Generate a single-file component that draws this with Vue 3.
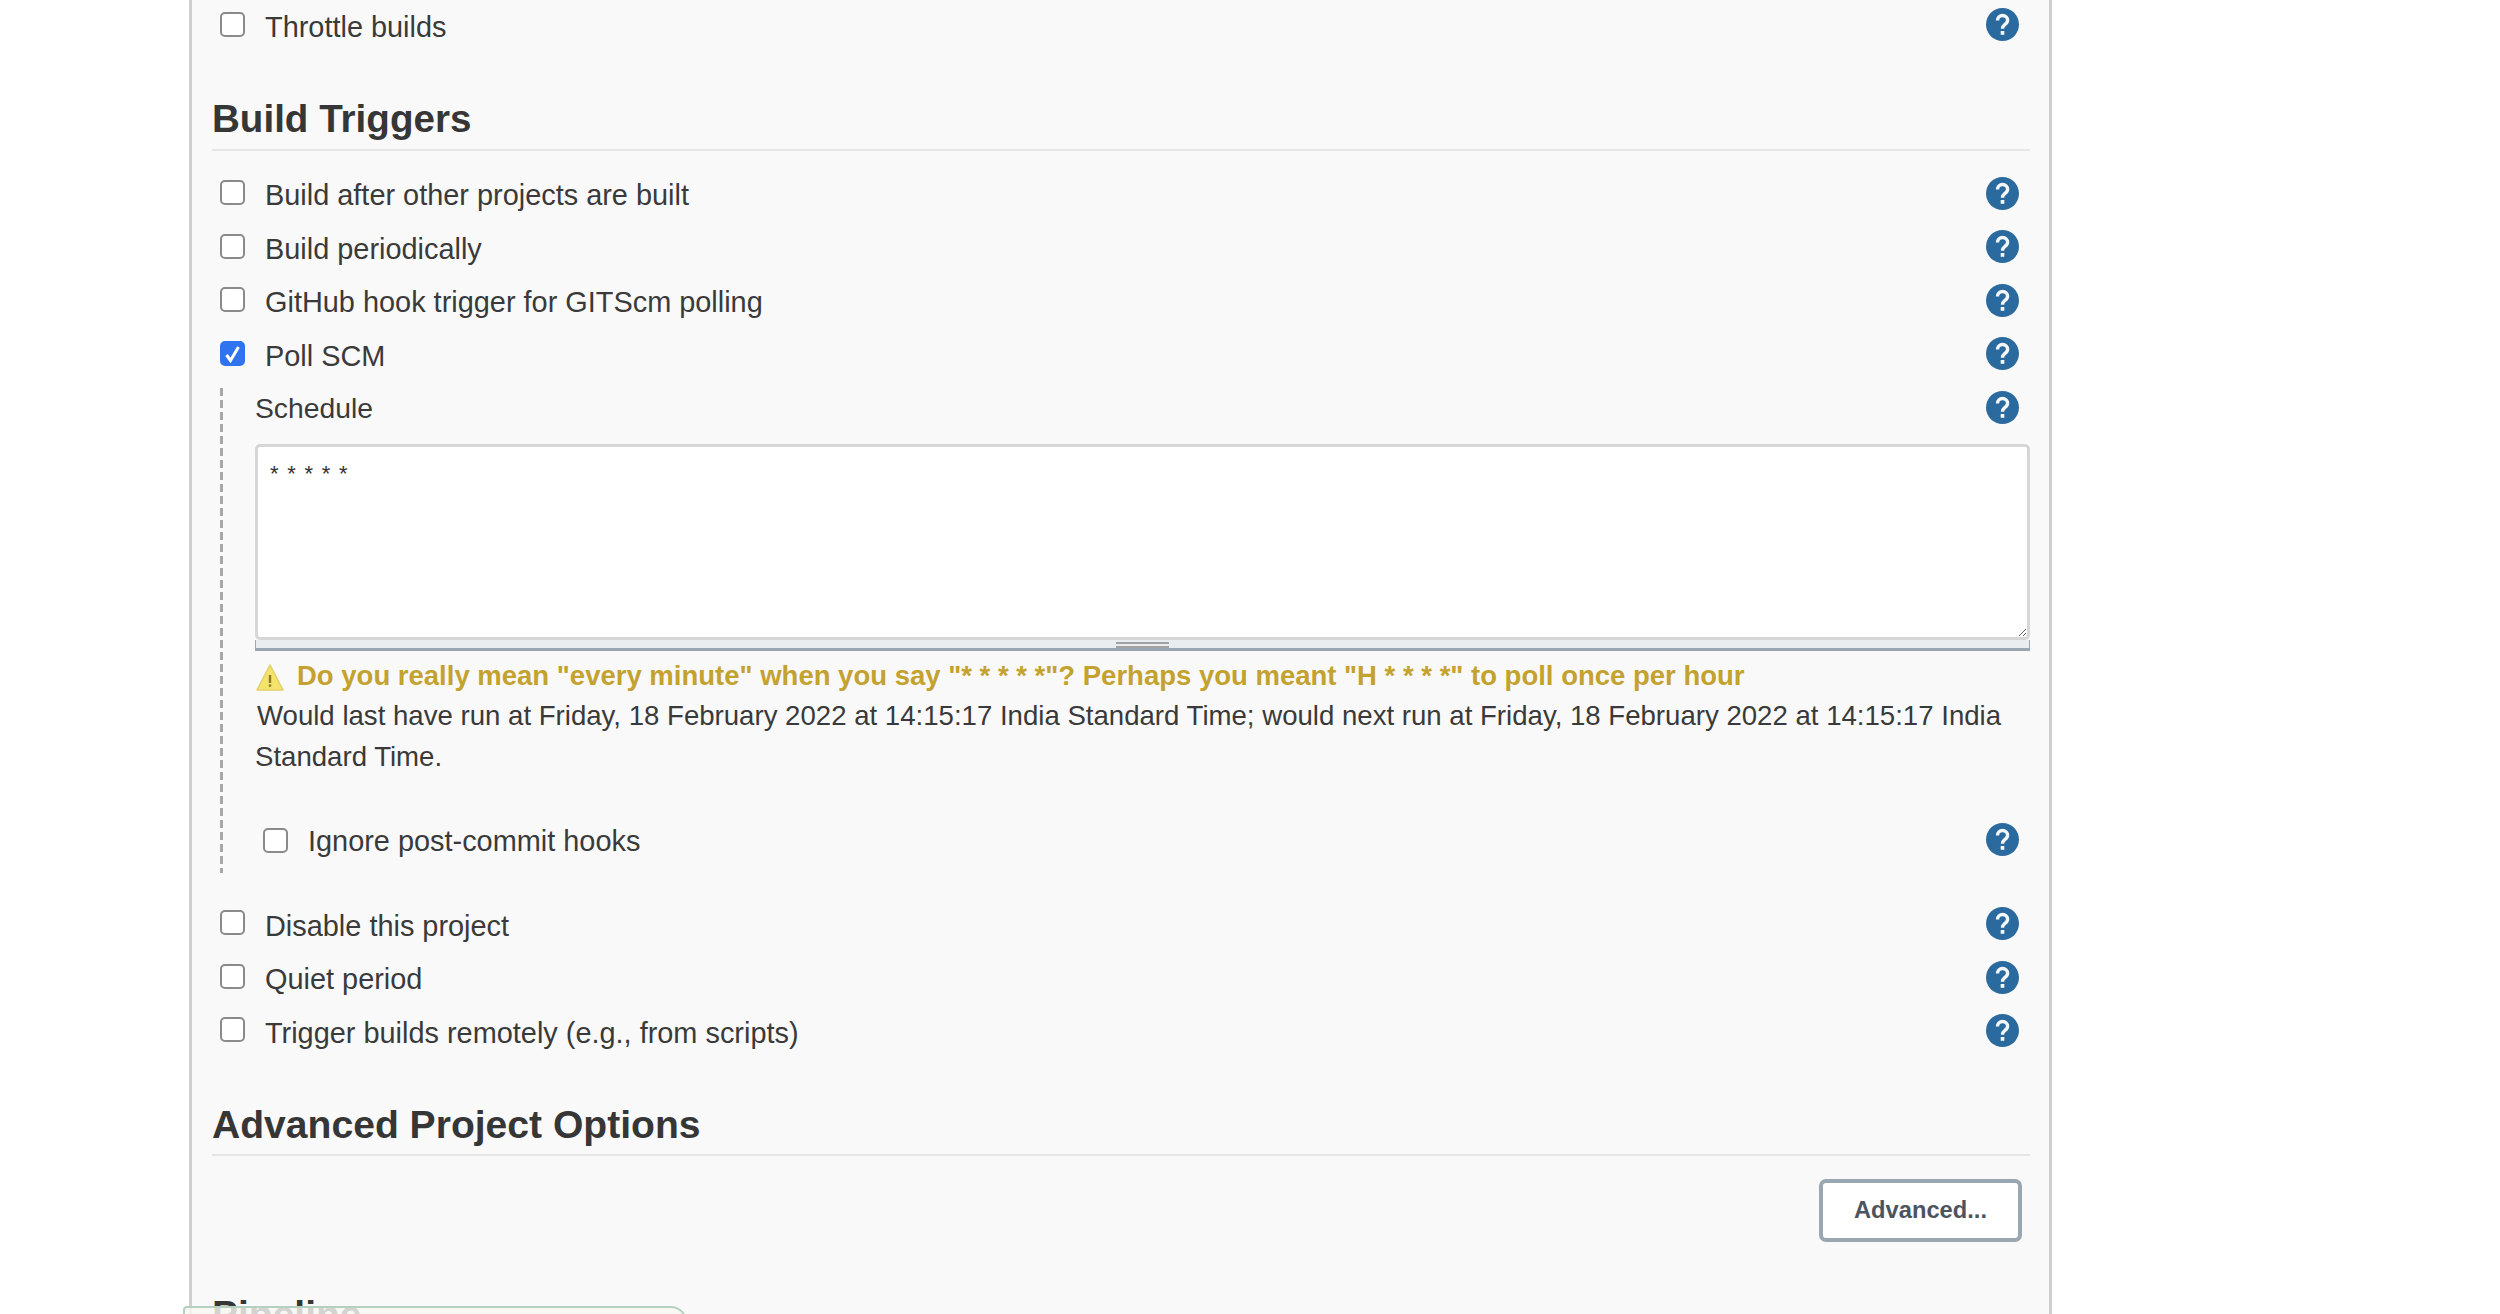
<script setup>
const triggers = [
  { label: 'Build after other projects are built', checked: false },
  { label: 'Build periodically', checked: false },
  { label: 'GitHub hook trigger for GITScm polling', checked: false },
  { label: 'Poll SCM', checked: true },
]
const lower = ['Disable this project', 'Quiet period', 'Trigger builds remotely (e.g., from scripts)']
</script>

<template>
  <div class="page">
    <main class="panel">
      <div class="row">
        <span class="box"></span>
        <span class="label">Throttle builds</span>
        <svg class="help" viewBox="0 0 33 33"><circle cx="16.5" cy="16.5" r="16.5" /><path d="M11.5 12.5C11.5 9.5 13.7 7.5 16.5 7.5C19.5 7.5 21.6 9.6 21.6 12.2C21.6 14.5 20.2 15.6 18.7 16.7C17.2 17.8 16.5 18.6 16.5 20.8" /><rect x="14.7" y="23" width="3.6" height="3.8" /></svg>
      </div>

      <h2 class="heading">Build Triggers</h2>
      <div class="rows">
        <div v-for="t in triggers" :key="t.label" class="row">
          <span class="box" :class="{ on: t.checked }">
            <svg v-if="t.checked" viewBox="0 0 25 25"><path d="M6.5 14L10.5 19.5L18.5 6" /></svg>
          </span>
          <span class="label">{{ t.label }}</span>
          <svg class="help" viewBox="0 0 33 33"><circle cx="16.5" cy="16.5" r="16.5" /><path d="M11.5 12.5C11.5 9.5 13.7 7.5 16.5 7.5C19.5 7.5 21.6 9.6 21.6 12.2C21.6 14.5 20.2 15.6 18.7 16.7C17.2 17.8 16.5 18.6 16.5 20.8" /><rect x="14.7" y="23" width="3.6" height="3.8" /></svg>
        </div>
      </div>

      <section class="nested">
        <div class="schedule-head">
          <span class="text">Schedule</span>
          <svg class="help" viewBox="0 0 33 33"><circle cx="16.5" cy="16.5" r="16.5" /><path d="M11.5 12.5C11.5 9.5 13.7 7.5 16.5 7.5C19.5 7.5 21.6 9.6 21.6 12.2C21.6 14.5 20.2 15.6 18.7 16.7C17.2 17.8 16.5 18.6 16.5 20.8" /><rect x="14.7" y="23" width="3.6" height="3.8" /></svg>
        </div>
        <div class="editor">
          <textarea class="cron" readonly spellcheck="false">* * * * *</textarea>
          <div class="grippie"><span class="grip"></span></div>
        </div>
        <div class="warning">
          <svg class="warn-icon" viewBox="0 0 28 27">
            <path d="M14 1L27 26H1Z" fill="#f5e46a" stroke="#e3d06c" stroke-width="1.6" stroke-linejoin="round" />
            <rect x="12.8" y="11" width="2.4" height="8" fill="#8a7a2c" />
            <rect x="12.8" y="20.4" width="2.4" height="2.4" fill="#8a7a2c" />
          </svg>
          <span>Do you really mean "every minute" when you say "* * * * *"? Perhaps you meant "H * * * *" to poll once per hour</span>
        </div>
        <p class="note">Would last have run at Friday, 18 February 2022 at 14:15:17 India Standard Time; would next run at Friday, 18 February 2022 at 14:15:17 India Standard Time.</p>
        <div class="row inner">
          <span class="box"></span>
          <span class="label">Ignore post-commit hooks</span>
          <svg class="help" viewBox="0 0 33 33"><circle cx="16.5" cy="16.5" r="16.5" /><path d="M11.5 12.5C11.5 9.5 13.7 7.5 16.5 7.5C19.5 7.5 21.6 9.6 21.6 12.2C21.6 14.5 20.2 15.6 18.7 16.7C17.2 17.8 16.5 18.6 16.5 20.8" /><rect x="14.7" y="23" width="3.6" height="3.8" /></svg>
        </div>
      </section>

      <div class="rows after">
        <div v-for="l in lower" :key="l" class="row">
          <span class="box"></span>
          <span class="label">{{ l }}</span>
          <svg class="help" viewBox="0 0 33 33"><circle cx="16.5" cy="16.5" r="16.5" /><path d="M11.5 12.5C11.5 9.5 13.7 7.5 16.5 7.5C19.5 7.5 21.6 9.6 21.6 12.2C21.6 14.5 20.2 15.6 18.7 16.7C17.2 17.8 16.5 18.6 16.5 20.8" /><rect x="14.7" y="23" width="3.6" height="3.8" /></svg>
        </div>
      </div>

      <h2 class="heading advanced">Advanced Project Options</h2>
      <div class="actions"><button class="btn" type="button">Advanced...</button></div>
      <h2 class="pipeline">Pipeline</h2>
    </main>
    <div class="overlay"></div>
  </div>
</template>

<style>
html, body { margin: 0; background: #fff; }
</style>

<style scoped>
.page {
  position: relative;
  height: 1314px;
  overflow: hidden;
  font-family: "Liberation Sans", Arial, sans-serif;
  color: #3a3a3a;
}
.panel {
  box-sizing: border-box;
  width: 1863px;
  height: 1314px;
  margin-left: 189px;
  padding: 0 19px 0 20px;
  background: #f9f9f9;
  border-left: 3px solid #cfcfcf;
  border-right: 3px solid #cfcfcf;
  overflow: hidden;
}
.row {
  display: flex;
  align-items: center;
  height: 53.5px;
  padding: 0 11px 0 8px;
}
.box {
  flex: none;
  box-sizing: border-box;
  width: 25px;
  height: 25px;
  margin-top: -5px;
  background: #fff;
  border: 2px solid #8a8a8a;
  border-radius: 5px;
}
.box.on { background: #2f74ee; border-color: #2f74ee; }
.box svg { display: block; width: 25px; height: 25px; margin: -2px; }
.box path { fill: none; stroke: #fff; stroke-width: 3; }
.label {
  flex: 1;
  margin-left: 20px;
  font-size: 28.9px;
  line-height: 40px;
}
.help { flex: none; width: 33px; height: 33px; margin-top: -4px; }
.help circle { fill: #2b6a9e; }
.help path { fill: none; stroke: #f4f8fb; stroke-width: 3.4; }
.help rect { fill: #f4f8fb; }
.heading {
  margin: 0;
  padding: 45.5px 0 9.5px;
  font-size: 38.6px;
  line-height: 40px;
  font-weight: 700;
  color: #363636;
  border-bottom: 2px solid #e5e5e5;
}
.rows { margin-top: 18px; }
.nested {
  margin: 5px 0 0 8px;
  padding: 0 0 0 35px;
  height: 485px;
  background: repeating-linear-gradient(to bottom, #a8a8a8 0 8px, transparent 8px 12px) left top / 3px 100% no-repeat;
}
.schedule-head {
  display: flex;
  align-items: center;
  justify-content: space-between;
  height: 40px;
  padding: 0 11px 0 0;
}
.schedule-head .help { margin-top: 0; }
.text { font-size: 28.3px; line-height: 40px; }
.editor { margin-top: 16px; }
.cron {
  display: block;
  box-sizing: border-box;
  width: 100%;
  height: 196px;
  padding: 14px 12px;
  background: #fff;
  border: 3px solid #d6d6d6;
  border-radius: 5px;
  outline: none;
  resize: vertical;
  font-family: "Liberation Sans", Arial, sans-serif;
  font-size: 22px;
  word-spacing: 2.6px;
  line-height: 26px;
  color: #333;
}
.grippie {
  display: flex;
  justify-content: center;
  box-sizing: border-box;
  width: 100%;
  height: 11px;
  background: #e9edf0;
  border-left: 1px solid #9aa7b0;
  border-right: 1px solid #9aa7b0;
  border-bottom: 3px solid #9aa7b0;
}
.grip {
  width: 53px;
  height: 6px;
  margin-top: 2px;
  border-top: 2px solid #a2a2a2;
  border-bottom: 2px solid #a2a2a2;
  box-sizing: border-box;
}
.warning {
  display: flex;
  align-items: center;
  gap: 13px;
  margin-top: 9px;
  padding-left: 1px;
  font-size: 27.5px;
  line-height: 32px;
  font-weight: 700;
  color: #c4a22f;
}
.warn-icon { flex: none; width: 28px; height: 27px; margin-top: 3px; }
.note {
  margin: 3px 0 0;
  width: 1760px;
  font-size: 27.6px;
  line-height: 41px;
  text-indent: 2px;
}
.inner { margin-top: 37.5px; height: 53px; }
.inner .box { margin-top: 0; }
.inner .help { margin-top: -3px; }
.after { margin-top: 26.5px; }
.after .box { margin-top: -6px; }
.advanced { padding-top: 45px; font-size: 39.1px; }
.actions {
  display: flex;
  justify-content: flex-end;
  margin-top: 22.5px;
  padding-right: 8px;
}
.btn {
  box-sizing: border-box;
  width: 203px;
  height: 63px;
  background: #fff;
  border: 4px solid #9aa7b0;
  border-radius: 7px;
  color: #4d545d;
  font-family: "Liberation Sans", Arial, sans-serif;
  font-size: 23.7px;
  font-weight: 700;
}
.pipeline {
  margin: 53.5px 0 0;
  font-size: 39px;
  line-height: 40px;
  font-weight: 700;
  color: #363636;
}
.overlay {
  position: absolute;
  left: 183px;
  top: 1306px;
  width: 504px;
  height: 30px;
  box-sizing: border-box;
  background: rgba(246, 247, 243, 0.82);
  border: 2px solid #b6d0bf;
  border-radius: 4px 16px 0 0;
}
</style>
